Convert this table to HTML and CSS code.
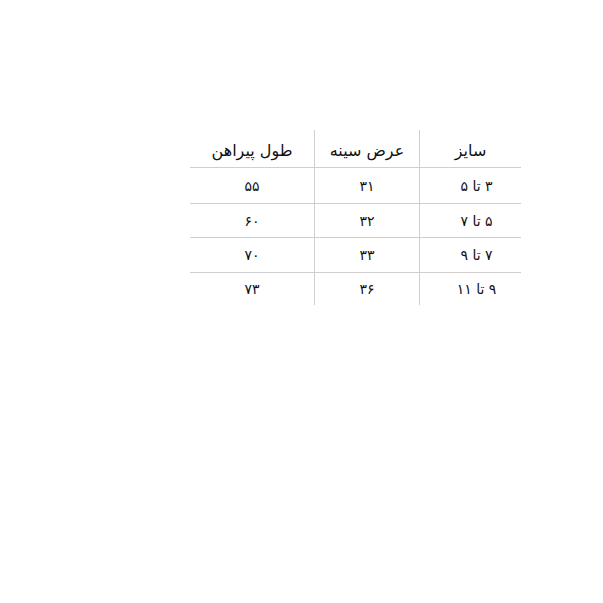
FILE: index.html
```html
<!DOCTYPE html>
<html lang="fa">
<head>
<meta charset="utf-8">
<link rel="stylesheet" href="styles.css">
</head>
<body>
<div class="page">
  <table class="sizes" dir="rtl">
    <tr class="head">
      <th class="c1">سایز</th>
      <th class="c2">عرض سینه</th>
      <th class="c3">طول پیراهن</th>
    </tr>
    <tr class="r1"><td>۳ تا ۵</td><td>۳۱</td><td>۵۵</td></tr>
    <tr class="r2"><td>۵ تا ۷</td><td>۳۲</td><td>۶۰</td></tr>
    <tr class="r3"><td>۷ تا ۹</td><td>۳۳</td><td>۷۰</td></tr>
    <tr class="r4"><td>۹ تا ۱۱</td><td>۳۶</td><td>۷۳</td></tr>
  </table>
</div>
</body>
</html>
```
FILE: styles.css
```css
html, body {
  margin: 0;
  padding: 0;
  background: #ffffff;
}
.page {
  width: 603px;
  height: 603px;
  padding-top: 130px;
  padding-left: 190px;
  box-sizing: border-box;
}
.sizes {
  border-collapse: collapse;
  width: 329px;
  table-layout: fixed;
  font-family: "DejaVu Sans", serif;
  color: #111;
}
.sizes th, .sizes td {
  padding: 0;
  text-align: center;
  vertical-align: middle;
  border-left: 1px solid #cfcfcf;
  border-top: 1px solid #cfcfcf;
}
.sizes tr > :last-child { border-left: none; }
.sizes tr.head > * { border-top: none; }
.sizes th {
  font-weight: normal;
  font-size: 16px;
  height: 34px;
  padding-top: 3px;
}
.sizes td { font-size: 14px; }
.c1 { width: 101px; }
.c2 { width: 104px; }
.c3 { width: 124px; }
.r1 td { height: 35px; }
.r2 td { height: 33px; }
.r3 td { height: 34px; }
.r4 td { height: 32px; }
.sizes td:first-child { padding-left: 12px; }
```
